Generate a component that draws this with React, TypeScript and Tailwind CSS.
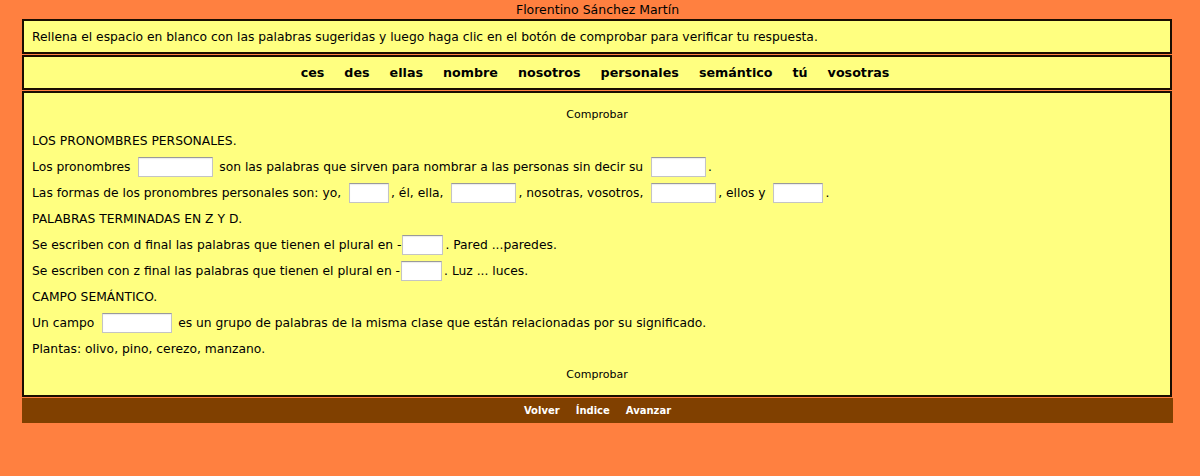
import React from "react";

const words = ["ces", "des", "ellas", "nombre", "nosotros", "personales", "semántico", "tú", "vosotras"];

function Blank({ w, tight }: { w: number; tight?: boolean }) {
  return (
    <input
      type="text"
      style={{ width: w }}
      className={
        (tight ? "ml-[1px] " : "ml-[4px] ") +
        "mr-[2px] h-[20px] border border-[#c4c4c4] border-t-[#9a9a9a] bg-white align-middle shadow-[inset_0_1px_1px_rgba(0,0,0,0.08)] outline-none"
      }
    />
  );
}

function Row({ children }: { children: React.ReactNode }) {
  return <div className="flex h-[26px] items-center whitespace-pre">{children}</div>;
}

export default function App() {
  return (
    <div
      className="min-h-[476px] bg-[#ff8040] text-black"
      style={{ fontFamily: '"DejaVu Sans", "Open Sans", sans-serif' }}
    >
      <div className="ml-[22px] w-[1151px]">
        <div className="flex h-[19px] items-center justify-center pt-[1px] text-[12.5px] leading-none">
          Florentino Sánchez Martín
        </div>

        <div className="mr-[1px] flex h-[35px] items-center border-2 border-[#1a0d00] bg-[#ffff80] pl-[8px] pt-[1px] text-[12.3px]">
          Rellena el espacio en blanco con las palabras sugeridas y luego haga clic en el botón de comprobar para verificar tu respuesta.
        </div>

        <div className="mr-[1px] mt-[1px] flex h-[35px] items-center justify-center border-2 border-[#1a0d00] bg-[#ffff80] pr-[4px] pt-[1px] text-[12.7px] font-bold">
          {words.map((w) => (
            <span key={w} className="px-[10px]">
              {w}
            </span>
          ))}
        </div>

        <div className="mr-[1px] mt-[1px] border-2 border-[#1a0d00] bg-[#ffff80] px-[8px] pb-[7px] pt-[9px] text-[12.3px]">
          <div className="flex h-[26px] items-center justify-center text-[11px]">Comprobar</div>
          <Row>LOS PRONOMBRES PERSONALES.</Row>
          <Row>
            Los pronombres <Blank w={75} /> son las palabras que sirven para nombrar a las personas sin decir su <Blank w={55} />.
          </Row>
          <Row>
            Las formas de los pronombres personales son: yo, <Blank w={40} />, él, ella, <Blank w={65} />, nosotras, vosotros, <Blank w={65} />, ellos y <Blank w={50} />.
          </Row>
          <Row>PALABRAS TERMINADAS EN Z Y D.</Row>
          <Row>
            Se escriben con d final las palabras que tienen el plural en -<Blank w={41} tight />. Pared ...paredes.
          </Row>
          <Row>
            Se escriben con z final las palabras que tienen el plural en -<Blank w={41} tight />. Luz ... luces.
          </Row>
          <Row>CAMPO SEMÁNTICO.</Row>
          <Row>
            Un campo <Blank w={70} /> es un grupo de palabras de la misma clase que están relacionadas por su significado.
          </Row>
          <Row>Plantas: olivo, pino, cerezo, manzano.</Row>
          <div className="flex h-[26px] items-center justify-center text-[11px]">Comprobar</div>
        </div>

        <div className="mt-[1px] flex h-[25px] items-center justify-center gap-[16px] bg-[#804000] text-[10px] font-bold text-white">
          <span>Volver</span>
          <span>Índice</span>
          <span>Avanzar</span>
        </div>
      </div>
    </div>
  );
}
